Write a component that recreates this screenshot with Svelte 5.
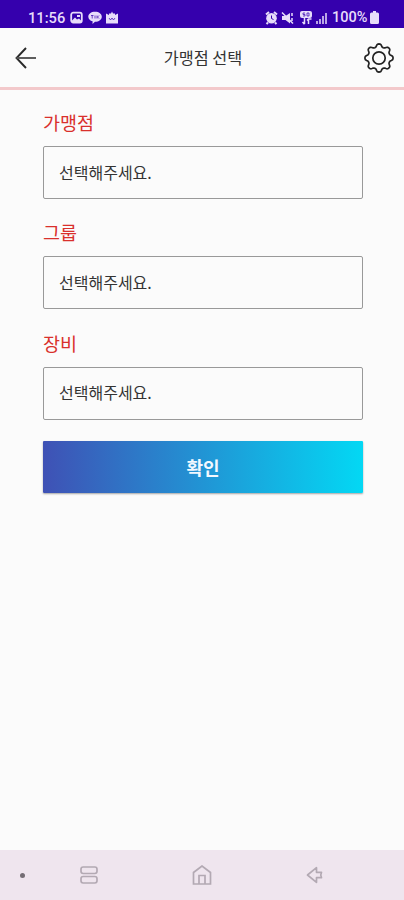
<script lang="ts">
	const fields = [
		{ id: 'store', label: '가맹점' },
		{ id: 'group', label: '그룹' },
		{ id: 'device', label: '장비' }
	];

	// eight soft teeth around the centre of a 32x32 box
	function gearPath() {
		const points: string[] = [];
		for (let i = 0; i < 96; i++) {
			const angle = (i / 96) * Math.PI * 2;
			const wave = Math.cos(angle * 8);
			const r = 12.6 + 1.6 * Math.tanh(wave * 1.5);
			points.push(`${(16 + r * Math.sin(angle)).toFixed(2)} ${(16 - r * Math.cos(angle)).toFixed(2)}`);
		}
		return `M${points.join('L')}Z`;
	}
</script>

<div class="screen">
	<div class="status-bar">
		<span class="clock">11:56</span>
		<svg class="notices" width="50" height="14" viewBox="0 0 50 14" aria-hidden="true">
			<rect x="1.2" y="1.7" width="10.6" height="9.8" rx="2" fill="none" stroke="currentColor" stroke-width="1.8" />
			<path d="m2 9.500 3-3 2 2 2-1 2 2v2H2zM7 4h3v2H7z" fill="currentColor" />
			<path d="M25 .7c4 0 6.800 2.100 6.800 5s-2.800 5-6.800 5l-2.500 2.300.1-2.700c-2.600-.7-4.300-2.400-4.300-4.600 0-2.900 2.700-5 6.700-5z" fill="currentColor" />
			<path d="M21 4.500h2.500M22.200 4.500v3M25 7.500v-3M27 4.500v3M29 4.500 27.500 6 29 7.500" fill="none" stroke="#3500ad" stroke-width=".7" />
			<path d="M36 2.500 39 4V2.500h2L42 .500l1 2h2V4l3-1.500V12.500H36z" fill="currentColor" />
			<path d="m39 7 1.500 2L42 7l1.500 2L45 7" fill="none" stroke="#3500ad" stroke-width=".7" />
		</svg>
		<svg class="signals" width="64" height="16" viewBox="0 0 64 16" aria-hidden="true">
			<path d="m1 4.500 3-2.500M12 4.500 9 2M3 12.500l-1.500 1.500M10 12.500l1.500 1.500" stroke="currentColor" stroke-width="2" />
			<circle cx="6.500" cy="8.300" r="5.300" fill="currentColor" />
			<path d="M6.500 5.500v3l2 1" fill="none" stroke="#3500ad" />
			<path d="M17 6h3.500L25 3v10.500L20.500 10H17z" fill="currentColor" />
			<path d="m17 2.500 11 11M27 3v3M27 8v3" fill="none" stroke="currentColor" stroke-width="1.5" />
			<rect x="35" y="1" width="12" height="7" rx="2" fill="currentColor" />
			<path d="M40 3h-2v1.500h2V6h-2M42 3h2v3h-2z" fill="none" stroke="#3500ad" stroke-width=".7" />
			<path d="M39.500 8v6m-2-2 2 2.200M43.500 14V9m-1.500 1.500L43.500 9h3" fill="none" stroke="currentColor" stroke-width="1.500" />
			<path d="M51 11h2v3h-2zM54 9h2v5h-2zM57 6h2v8h-2z" fill="currentColor" opacity=".75" />
			<path d="M60 3h2v11h-2z" fill="currentColor" opacity=".75" />
		</svg>
		<span class="percent">100%</span>
		<svg class="battery" width="9" height="13" viewBox="0 0 9 13" aria-hidden="true">
			<path d="M3 0h3v1.5h1.5Q9 1.500 9 3v8.500q0 1.500-1.500 1.500h-6Q0 13 0 11.500V3q0-1.500 1.500-1.500H3z" fill="currentColor" />
		</svg>
	</div>

	<header class="app-bar">
		<button class="icon-button" type="button" aria-label="뒤로">
			<svg width="22" height="22" viewBox="0 0 22 22" fill="none" stroke="#292929" stroke-width="1.9">
				<path d="M11 1 1.500 11 11 21" />
				<path d="M1.500 11H21" stroke="#555" />
			</svg>
		</button>
		<h1>가맹점 선택</h1>
		<button class="icon-button" type="button" aria-label="설정">
			<svg width="32" height="32" viewBox="0 0 32 32" fill="none" stroke="#222" stroke-width="1.7">
				<path d={gearPath()} stroke-linejoin="round" />
				<circle cx="16" cy="16" r="6.200" />
			</svg>
		</button>
	</header>

	<main class="form">
		{#each fields as field (field.id)}
			<div class="field">
				<span class="label" id={field.id}>{field.label}</span>
				<button class="select" type="button" aria-labelledby={field.id}>선택해주세요.</button>
			</div>
		{/each}
		<button class="confirm" type="button">확인</button>
	</main>

	<nav class="nav-bar">
		<span class="dot"></span>
		<svg class="recents" width="18" height="18" viewBox="0 0 18 18" aria-hidden="true">
			<rect x="1" y="1" width="16" height="6.500" rx="2.200" />
			<rect x="1" y="10.500" width="16" height="6.500" rx="2.200" />
		</svg>
		<svg class="home" width="20" height="20" viewBox="0 0 20 20" aria-hidden="true">
			<path d="M1.500 19V7.500L10 1l8.500 6.500V19zM7 19v-8.500h6V19" />
		</svg>
		<svg class="back" width="17" height="18" viewBox="0 0 17 18" aria-hidden="true">
			<path d="m1.500 9 9-7.300v4.600h5q-1.500 2.700 0 5.400h-5v4.600z" stroke-linejoin="round" />
		</svg>
	</nav>
</div>

<style>
	:global(body) {
		margin: 0;
	}

	.screen {
		display: flex;
		flex-direction: column;
		width: 404px;
		height: 900px;
		background: #fbfbfb;
		color: #333;
		font-family: 'Noto Sans CJK KR', sans-serif;
	}

	button {
		padding: 0;
		border: none;
		background: none;
		color: inherit;
		font-family: inherit;
	}

	svg {
		display: block;
		flex: none;
	}

	.status-bar {
		display: flex;
		align-items: center;
		box-sizing: border-box;
		height: 28px;
		padding: 7px 25px 0 28px;
		background: #3500ad;
		color: #e7dcfa;
		font-family: Roboto, sans-serif;
		font-size: 14.7px;
		font-weight: 500;
		line-height: 20px;
	}

	.clock {
		width: 42px;
	}

	.signals {
		margin-left: auto;
	}

	.percent {
		width: 37px;
		margin-left: 3px;
		font-size: 14.5px;
	}

	.battery {
		margin-left: 1px;
	}

	.app-bar {
		display: flex;
		align-items: center;
		justify-content: space-between;
		box-sizing: border-box;
		height: 62px;
		padding: 0 9px 0 15px;
		border-bottom: 3px solid #f3c9cb;
	}

	.icon-button {
		display: flex;
		width: 32px;
	}

	h1 {
		margin: 0 4px 1px 0;
		font-size: 16.3px;
		font-weight: 400;
		line-height: 24px;
	}

	.form {
		display: flex;
		flex: 1;
		flex-direction: column;
		gap: 20.3px;
		padding: 19px 41px 0 43px;
	}

	.field {
		display: flex;
		flex-direction: column;
		gap: 11px;
	}

	.label {
		color: #d9302c;
		font-size: 18.5px;
		line-height: 26px;
	}

	.select {
		box-sizing: border-box;
		height: 53px;
		padding: 0 15px 2px;
		border: 1px solid #999;
		border-radius: 2px;
		font-size: 16px;
		text-align: left;
	}

	.confirm {
		height: 52px;
		margin-top: 1px;
		border-radius: 1px;
		background: linear-gradient(90deg, #3f51b5, #03d8f4);
		box-shadow: 0 1px 2px rgb(0 0 0 / 35%);
		color: #f2f8ff;
		font-size: 18px;
		font-weight: 700;
	}

	.nav-bar {
		display: flex;
		align-items: center;
		height: 50px;
		background: #efe5ee;
		fill: none;
		stroke: #b3a9b3;
		stroke-width: 1.7;
	}

	.dot {
		width: 5px;
		height: 5px;
		margin-left: 20px;
		border-radius: 50%;
		background: #746d74;
	}

	.recents {
		margin-left: 55px;
	}

	.home {
		margin-left: 94px;
	}

	.back {
		margin-left: 94px;
	}
</style>
